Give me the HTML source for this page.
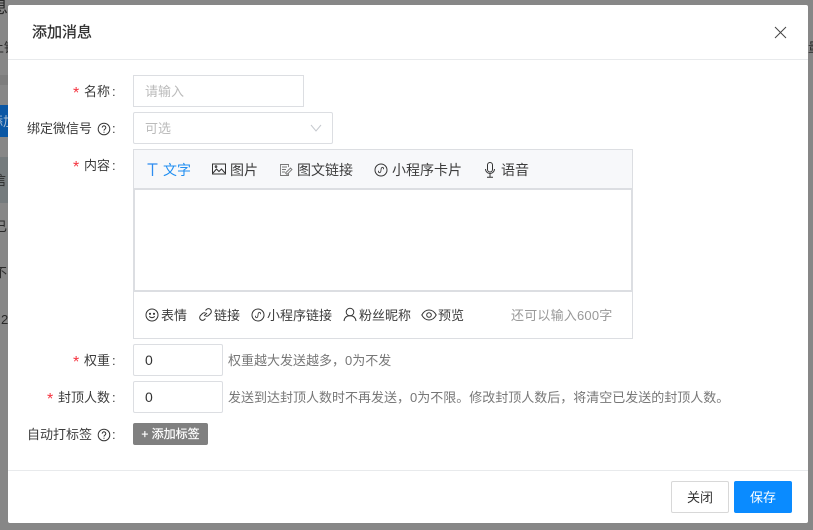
<!DOCTYPE html>
<html lang="zh"><head><meta charset="utf-8"><style>
html,body{margin:0;padding:0}
body{width:813px;height:530px;overflow:hidden;position:relative;background:#878787;font-family:"Liberation Sans","Noto Sans CJK SC",sans-serif;font-size:13px;color:#3c3c3c}
.a{position:absolute;white-space:nowrap;line-height:18px}
.t{font-size:14px}
.s{position:absolute;line-height:18px;font-size:16px;color:#f5333f}
.b{position:absolute;box-sizing:border-box;border:1px solid #dcdee2;background:#fff}
svg{position:absolute;fill:none;stroke:#333;stroke-width:1}
.bg{color:#2a2a2a}
</style></head><body>
<div class="b" style="left:0;top:75px;width:8px;height:10px;background:#7d7d7d;border:0"></div>
<div class="b" style="left:0;top:105px;width:8px;height:32px;background:#0b57a4;border:0"></div>
<div class="b" style="left:0;top:157px;width:8px;height:46px;background:#757b7d;border:0"></div>
<div class="a bg" style="left:-9px;top:-1px;font-size:17px">息</div>
<div class="a bg" style="left:-9px;top:39px">上钮</div>
<div class="a" style="left:-10px;top:113px;color:#a9bdd2">添加</div>
<div class="a bg" style="left:-7px;top:172px">信</div>
<div class="a bg" style="left:-6px;top:218px">已</div>
<div class="a bg" style="left:-6px;top:264px">不</div>
<div class="a bg" style="left:1px;top:311px;font-size:13px">2</div>
<div class="a bg" style="left:808px;top:39px">量</div>

<div style="position:absolute;left:8px;top:5px;width:800px;height:518px;background:#fff;border-radius:2px"></div>
<div style="position:absolute;left:8px;top:59px;width:800px;height:1px;background:#e8eaec"></div>
<div style="position:absolute;left:8px;top:470px;width:800px;height:1px;background:#e8eaec"></div>
<div class="a" style="left:32px;top:24px;font-size:15px;color:#2d2d2d;-webkit-text-stroke:.25px #2d2d2d">添加消息</div>
<svg style="left:774px;top:26px" width="13" height="13" viewBox="0 0 13 13"><path d="M1 1L12 12M12 1L1 12" stroke="#444"/></svg>

<div class="s" style="left:73px;top:85px">*</div>
<div class="a" style="left:84px;top:83px">名称</div><div class="a" style="left:112px;top:83px">:</div>
<div class="b" style="left:133px;top:75px;width:171px;height:32px"></div>
<div class="a" style="left:145px;top:83px;color:#bbb">请输入</div>

<div class="a" style="left:27px;top:120px">绑定微信号</div>
<svg style="left:97px;top:122px" width="14" height="14" viewBox="0 0 14 14"><circle cx="7" cy="7" r="5.8"/><path d="M5.2 5.6a1.8 1.8 0 1 1 2.800 1.500c-.7.400-1 .8-1 1.500M7 9.800v1"/></svg>
<div class="a" style="left:112px;top:120px">:</div>
<div class="b" style="left:133px;top:112px;width:200px;height:32px;border-radius:2px"></div>
<div class="a" style="left:145px;top:120px;color:#bbb">可选</div>
<svg style="left:310px;top:124px" width="12" height="8" viewBox="0 0 12 8"><path d="M1 1l5 6 5-6" stroke="#c5c8ce"/></svg>

<div class="s" style="left:73px;top:159px">*</div>
<div class="a" style="left:84px;top:157px">内容</div><div class="a" style="left:112px;top:157px">:</div>
<div class="b" style="left:133px;top:149px;width:500px;height:190px"></div>
<div style="position:absolute;left:134px;top:150px;width:498px;height:38px;background:#f7f8fa"></div>
<div class="b" style="left:134px;top:188px;width:498px;height:104px;border-width:2px 1px 2px 1px"></div>

<svg style="left:147px;top:163px" width="11" height="13" viewBox="0 0 11 13"><path d="M.5 1h10M5.500 1V13" stroke="#2d8cf0" stroke-width="1.300"/></svg>
<div class="a t" style="left:163px;top:161px;color:#1f8ef1">文字</div>
<svg style="left:212px;top:163px" width="14" height="12" viewBox="0 0 14 12"><rect x=".5" y="1" width="13" height="10"/><path d="M1 10l3.500-4 2.500 2.500 2.500-2.500 3.500 4"/><circle cx="4" cy="3.600" r=".8"/></svg>
<div class="a t" style="left:230px;top:161px">图片</div>
<svg style="left:279px;top:163px" width="14" height="14" viewBox="0 0 14 14"><path d="M9.500 10.500V12.500H1.500V1.500H9.500V4M3 4h5M3 6.500h4M3 9h3M6.500 10l5-5 1.500 1.500-5 5z" stroke="#777" stroke-width=".9"/></svg>
<div class="a t" style="left:297px;top:161px">图文链接</div>
<svg style="left:374px;top:163px" width="14" height="14" viewBox="0 0 14 14"><circle cx="7" cy="7" r="6"/><path d="M4.800 7.800c-1 1 .2 2.400 1.300 1.700.6-.4.9-.9.9-2.500s.3-2.100.9-2.500c1.100-.7 2.300.7 1.300 1.700" stroke-width=".8"/></svg>
<div class="a t" style="left:392px;top:161px">小程序卡片</div>
<svg style="left:484px;top:162px" width="12" height="16" viewBox="0 0 12 16"><rect x="3.500" y=".5" width="5" height="9.500" rx="2.500"/><path d="M1.500 7a4.500 4.500 0 0 0 9 0M6 11.500V15M3 15.300h6"/></svg>
<div class="a t" style="left:501px;top:161px">语音</div>

<svg style="left:145px;top:308px" width="14" height="14" viewBox="0 0 14 14"><circle cx="7" cy="7" r="6"/><circle cx="5" cy="5.800" r=".6" fill="#333"/><circle cx="9" cy="5.800" r=".6" fill="#333"/><path d="M4.300 8.300c1.300 1.800 4.100 1.800 5.400 0"/></svg>
<div class="a" style="left:161px;top:307px">表情</div>
<svg style="left:198px;top:307px" width="15" height="15" viewBox="0 0 15 15" stroke-width="1.800"><path d="M6 9l3-3M7.500 3.500l1-1a2.800 2.800 0 0 1 4 4l-2 2a2.800 2.800 0 0 1-3 .5M7.500 11.500l-1 1a2.800 2.800 0 0 1-4-4l2-2a2.800 2.800 0 0 1 3-.5"/></svg>
<div class="a" style="left:214px;top:307px">链接</div>
<svg style="left:251px;top:308px" width="14" height="14" viewBox="0 0 14 14"><circle cx="7" cy="7" r="6"/><path d="M4.800 7.800c-1 1 .2 2.400 1.300 1.700.6-.4.9-.9.9-2.500s.3-2.100.9-2.500c1.100-.7 2.300.7 1.300 1.700" stroke-width=".8"/></svg>
<div class="a" style="left:267px;top:307px">小程序链接</div>
<svg style="left:343px;top:307px" width="14" height="15" viewBox="0 0 14 15" stroke-width="1.500"><circle cx="7" cy="5" r="3.800"/><path d="M1 14c.5-3.500 2.500-5.200 6-5.200s5.500 1.700 6 5.200"/></svg>
<div class="a" style="left:359px;top:307px">粉丝昵称</div>
<svg style="left:421px;top:309px" width="16" height="12" viewBox="0 0 16 12"><path d="M.8 6C2.500 2.800 5 1 8 1s5.500 1.800 7.200 5C13.500 9.200 11 11 8 11S2.500 9.200.8 6z"/><circle cx="8" cy="6" r="2.300"/></svg>
<div class="a" style="left:438px;top:307px">预览</div>
<div class="a" style="left:511px;top:307px;color:#999;letter-spacing:.2px">还可以输入600字</div>

<div class="s" style="left:73px;top:354px">*</div>
<div class="a" style="left:84px;top:352px">权重</div><div class="a" style="left:112px;top:352px">:</div>
<div class="b" style="left:133px;top:344px;width:90px;height:32px;border-radius:2px"></div>
<div class="a" style="left:145px;top:351px;font-size:14px;color:#333">0</div>
<div class="a" style="left:228px;top:352px;color:#777">权重越大发送越多，0为不发</div>

<div class="s" style="left:47px;top:391px">*</div>
<div class="a" style="left:58px;top:389px">封顶人数</div><div class="a" style="left:112px;top:389px">:</div>
<div class="b" style="left:133px;top:381px;width:90px;height:32px;border-radius:2px"></div>
<div class="a" style="left:145px;top:388px;font-size:14px;color:#333">0</div>
<div class="a" style="left:228px;top:389px;color:#777">发送到达封顶人数时不再发送，0为不限。修改封顶人数后，将清空已发送的封顶人数。</div>

<div class="a" style="left:27px;top:426px">自动打标签</div>
<svg style="left:97px;top:428px" width="14" height="14" viewBox="0 0 14 14"><circle cx="7" cy="7" r="5.800"/><path d="M5.200 5.600a1.800 1.800 0 1 1 2.800 1.500c-.7.400-1 .8-1 1.500M7 9.800v1"/></svg>
<div class="a" style="left:112px;top:426px">:</div>
<div style="position:absolute;left:133px;top:423px;width:75px;height:22px;background:#808080;border-radius:2px;color:#fff;font-size:12px;line-height:23px;text-align:center;white-space:nowrap;-webkit-text-stroke:.2px #fff">+ 添加标签</div>

<div class="b" style="left:671px;top:481px;width:58px;height:32px;border-radius:2px;border-color:#d8d8d8;color:#333;text-align:center;line-height:31px">关闭</div>
<div style="position:absolute;left:734px;top:481px;width:58px;height:32px;border-radius:2px;background:#0a8bff;color:#fff;text-align:center;line-height:33px">保存</div>
</body></html>
